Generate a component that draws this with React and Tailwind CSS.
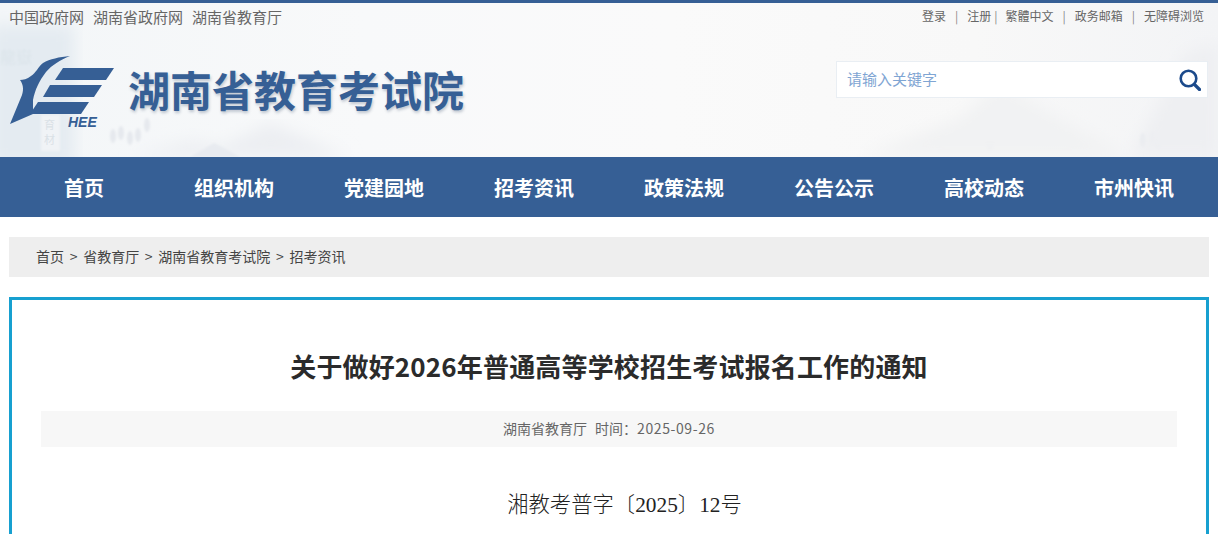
import React from 'react';

const navItems = ['首页', '组织机构', '党建园地', '招考资讯', '政策法规', '公告公示', '高校动态', '市州快讯'];
const govLinks = ['中国政府网', '湖南省政府网', '湖南省教育厅'];
const crumbs = ['首页', '省教育厅', '湖南省教育考试院', '招考资讯'];

// pale ink-wash scenery behind the header
const HeaderScenery = () => (
  <svg className="absolute inset-0" width="1218" height="154" viewBox="0 0 1218 154">
    <defs>
      <filter id="soft"><feGaussianBlur stdDeviation="8" /></filter>
      <filter id="soft2"><feGaussianBlur stdDeviation="1" /></filter>
    </defs>
    <rect x="-10" y="22" width="84" height="140" fill="#e4ebf1" filter="url(#soft)" />
    <text x="0" y="60" fontSize="16" fill="#dbe4ea" filter="url(#soft2)">龍嶽</text>
    <rect x="41" y="112" width="19" height="36" fill="#f0f3f6" filter="url(#soft2)" />
    <text x="44" y="126" fontSize="11" fill="#dae1e6">育</text>
    <text x="44" y="141" fontSize="11" fill="#dae1e6">材</text>
    <path d="M130 154 L190 138 L222 143 L270 120 L350 154 Z" fill="#eceef2" filter="url(#soft)" />
    <path d="M190 154 L214 140 L226 146 L240 154 Z" fill="#e8ebf0" filter="url(#soft2)" />
    <g fill="#e6e9ee" filter="url(#soft2)">
      <ellipse cx="113" cy="133" rx="3" ry="7" />
      <ellipse cx="121" cy="130" rx="3" ry="7" />
      <ellipse cx="130" cy="135" rx="3" ry="7" />
      <ellipse cx="138" cy="132" rx="3" ry="7" />
      <ellipse cx="147" cy="122" rx="3" ry="7" />
      <ellipse cx="1143" cy="137" rx="3" ry="7" />
      <ellipse cx="1153" cy="135" rx="3" ry="7" />
      <ellipse cx="1158" cy="139" rx="3" ry="7" />
      <ellipse cx="1168" cy="128" rx="3" ry="7" />
      <ellipse cx="1203" cy="106" rx="3" ry="7" />
      <ellipse cx="990" cy="136" rx="5" ry="11" />
    </g>
    <path d="M860 154 L960 115 L1000 80 L1060 115 L1130 154 Z" fill="#f1f2f3" filter="url(#soft)" />
    <path d="M1130 154 L1185 50 L1218 40 L1218 154 Z" fill="#eeeff2" filter="url(#soft)" />
  </svg>
);

const Logo = () => (
  <div className="relative w-[114px] h-[72px] shrink-0">
    <svg className="absolute inset-0" width="114" height="72" viewBox="0 0 114 72" fill="#365f95">
      <path d="M61 0 C50 1 41 3 34 7 C29 11 27 17 22 20 C18 23 14 24 11 24 C14 28 15 33 13 39 L1 68 L24 58 L24 44 C26 34 30 25 37 16 C43 9 51 4 61 0 Z" />
      <path d="M54 12 L105 12 L97 24 L46 24 Z" />
      <path d="M41 29 L93 29 L85 41 L34 41 Z" />
      <path d="M29 46 L80 46 L72 58 L21 58 Z" />
    </svg>
    <span className="absolute left-[59px] top-[60px] font-['Liberation_Sans',sans-serif] text-[14px] leading-[13px] font-bold italic text-[#365f95]">
      HEE
    </span>
  </div>
);

const SearchIcon = () => (
  <svg width="22" height="22" viewBox="0 0 22 22" fill="none" stroke="#1c4a8b">
    <circle cx="9.5" cy="9.5" r="7.8" strokeWidth="2.6" />
    <path d="M15.5 15.5 L20.5 20.5" strokeWidth="3.2" strokeLinecap="round" />
  </svg>
);

const App = () => {
  return (
    <div className="h-[534px] overflow-hidden bg-white font-['Noto_Sans_CJK_SC','Microsoft_YaHei',sans-serif]">
      <header className="relative h-[157px] border-t-[3px] border-[#365f95] bg-[linear-gradient(90deg,#f3f6f8_0%,#f8f9fa_30%,#fafafa_55%,#f8f8f8_80%,#f3f4f6_100%)]">
        <HeaderScenery />
        <div className="relative flex h-[27px] items-center justify-between pl-[9px] pr-[14px]">
          <div className="flex gap-[9px] text-[15px] leading-[27px] text-[#666]">
            {govLinks.map(link => <span key={link}>{link}</span>)}
          </div>
          <div className="flex items-center pb-[2px] text-[12px] leading-[25px] text-[#666]">
            <span>登录</span>
            <span className="mx-[9px] text-[#888]">|</span>
            <span>注册</span>
            <span className="ml-[3px] mr-[8px] text-[#888]">|</span>
            <span>繁體中文</span>
            <span className="mx-[9px] text-[#888]">|</span>
            <span>政务邮箱</span>
            <span className="mx-[9px] text-[#888]">|</span>
            <span>无障碍浏览</span>
          </div>
        </div>
        <div className="relative flex items-start justify-between pl-[9px] pr-[10px]">
          <div className="mt-[26px] flex items-start">
            <Logo />
            <h1 className="ml-[5px] mt-[3px] text-[42px] leading-[60px] font-bold text-[#365f95] [text-shadow:1px_2px_3px_rgba(60,80,110,0.3)]">
              湖南省教育考试院
            </h1>
          </div>
          <div className="mt-[31px] flex h-[37px] w-[372px] items-center justify-between border border-[#e9eef3] bg-white pl-[10px] pr-[6px]">
            <span className="text-[15px] text-[#7fa5d3]">请输入关键字</span>
            <SearchIcon />
          </div>
        </div>
      </header>

      <nav className="flex h-[60px] items-center bg-[#365f95] pl-[9px]">
        {navItems.map(item => (
          <a key={item} className="w-[150px] pt-[2px] text-center text-[20px] leading-[58px] font-bold text-white">{item}</a>
        ))}
      </nav>

      <main className="px-[9px] pt-[20px]">
        <div className="flex h-[40px] items-center bg-[#eee] pb-[2px] pl-[27px] text-[14px] text-[#444]">
          {crumbs.map((c, i) => (
            <React.Fragment key={c}>
              {i > 0 && <span className="mx-[5.7px]">&gt;</span>}
              <span>{c}</span>
            </React.Fragment>
          ))}
        </div>

        <article className="mt-[20px] h-[300px] border-[3px] border-[#17a0d0] px-[29px]">
          <h2 className="mt-[46px] text-center text-[26px] leading-[40px] font-bold tracking-[0.16px] text-[#2b2b2b]">
            关于做好2026年普通高等学校招生考试报名工作的通知
          </h2>
          <div className="mt-[25px] flex h-[36px] items-center justify-center gap-[8px] bg-[#f7f7f7] pb-[2px] text-[14px] text-[#666]">
            <span>湖南省教育厅</span>
            <span>时间：<span className="tracking-[0.6px]">2025-09-26</span></span>
          </div>
          <p className="mt-[42px] pl-[31px] text-center font-['Liberation_Serif','Noto_Sans_CJK_SC',serif] text-[21.33px] leading-[32px] font-light text-[#222]">
            湘教考普字〔2025〕12号
          </p>
        </article>
      </main>
    </div>
  );
};

export default App;
